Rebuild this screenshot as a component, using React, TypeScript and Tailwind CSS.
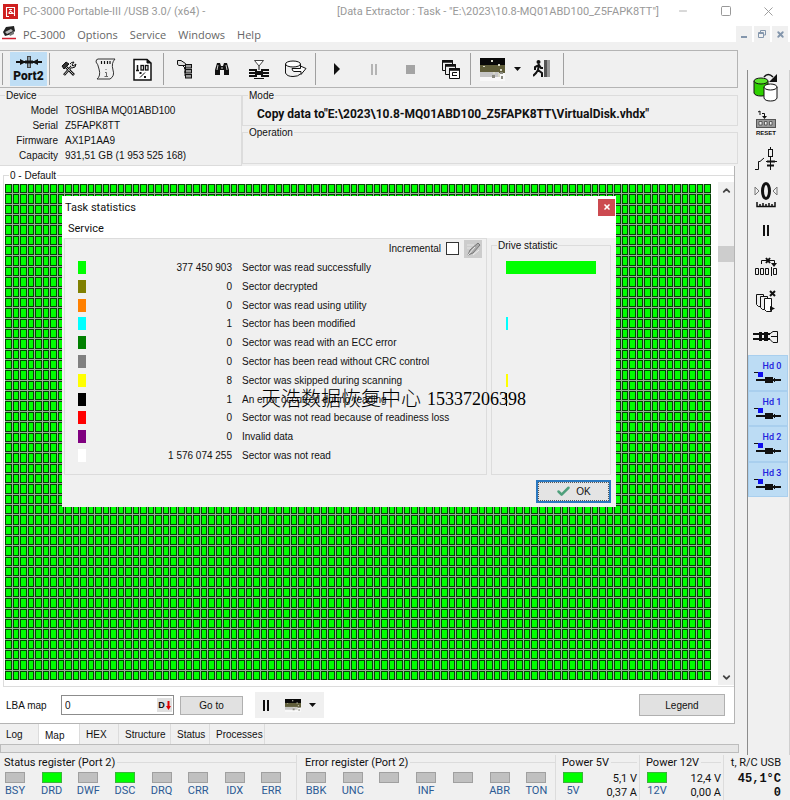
import type { ReactNode } from 'react';
import { Check, ChevronDown, ChevronUp, Minus, Square, X } from 'lucide-react';
import clsx from 'clsx';

const COLUMNS = 94;
const ROWS = 48;

const menuItems = ['PC-3000', 'Options', 'Service', 'Windows', 'Help'];

const deviceInfo = [
  { label: 'Model', value: 'TOSHIBA MQ01ABD100' },
  { label: 'Serial', value: 'Z5FAPK8TT' },
  { label: 'Firmware', value: 'AX1P1AA9' },
  { label: 'Capacity', value: '931,51 GB (1 953 525 168)' },
];

const statistics = [
  { color: 'bg-[#00ff00]', count: '377 450 903', text: 'Sector was read successfully', bar: 100 },
  { color: 'bg-[#808000]', count: '0', text: 'Sector decrypted', bar: 0 },
  { color: 'bg-[#ff8000]', count: '0', text: 'Sector was read using utility', bar: 0 },
  { color: 'bg-[#00ffff]', count: '1', text: 'Sector has been modified', bar: 2 },
  { color: 'bg-[#008000]', count: '0', text: 'Sector was read with an ECC error', bar: 0 },
  { color: 'bg-[#808080]', count: '0', text: 'Sector has been read without CRC control', bar: 0 },
  { color: 'bg-[#ffff00]', count: '8', text: 'Sector was skipped during scanning', bar: 2 },
  { color: 'bg-black', count: '1', text: 'An error occurred during reading', bar: 1 },
  { color: 'bg-[#ff0000]', count: '0', text: 'Sector was not read because of readiness loss', bar: 0 },
  { color: 'bg-[#800080]', count: '0', text: 'Invalid data', bar: 0 },
  { color: 'bg-white', count: '1 576 074 255', text: 'Sector was not read', bar: 0 },
];

const statusRegister = [
  { name: 'BSY', on: false },
  { name: 'DRD', on: true },
  { name: 'DWF', on: false },
  { name: 'DSC', on: true },
  { name: 'DRQ', on: false },
  { name: 'CRR', on: false },
  { name: 'IDX', on: false },
  { name: 'ERR', on: false },
];

const errorRegister = [
  { name: 'BBK', on: false },
  { name: 'UNC', on: false },
  { name: '', on: false },
  { name: 'INF', on: false },
  { name: '', on: false },
  { name: 'ABR', on: false },
  { name: 'TON', on: false },
];

const tabs = [
  { name: 'Log', width: 'w-[39px]' },
  { name: 'Map', width: 'w-[41px]' },
  { name: 'HEX', width: 'w-[39px]' },
  { name: 'Structure', width: 'w-[52px]' },
  { name: 'Status', width: 'w-[39px]' },
  { name: 'Processes', width: 'w-[55px]' },
];

/* ---------- icons ---------- */

function Svg({ w, h, children }: { w: number; h: number; children: ReactNode }) {
  return (
    <svg width={w} height={h} viewBox={`0 0 ${w} ${h}`} fill="none" stroke="#111" strokeWidth="1" className="shrink-0">
      {children}
    </svg>
  );
}

function AppLogo() {
  return (
    <Svg w={15} h={15}>
      <rect width="15" height="15" fill="#cf1f1f" stroke="none" />
      <path d="M3.500 12V3.500H11.500V12M3 12.500H6M5.500 9.500L7.500 7L10 9.500H6M6 5.500H9" stroke="#fff" strokeWidth="1.100" />
    </Svg>
  );
}

function DriveLogo() {
  return (
    <Svg w={15} h={15}>
      <path d="M1 7L4 2L12 1L13 6L10 9L3 11Z" fill="#222" stroke="none" />
      <path d="M3 7L9 4L11 6L5 9Z" fill="#bbb" stroke="none" />
      <path d="M7 9L12 6V9L8 11Z" fill="#777" stroke="none" />
      <path d="M0 13.500H14" stroke="#d02030" strokeWidth="1.500" />
    </Svg>
  );
}

function PortIcon() {
  return (
    <Svg w={26} h={14}>
      <path d="M0 7H26" strokeWidth="2" />
      <path d="M4 4L10 7L4 10ZM22 4L16 7L22 10Z" fill="#111" stroke="none" />
      <rect x="11.500" y="1.500" width="3" height="11" fill="#8a9aa5" stroke="#444" />
      <path d="M9 7H17" strokeWidth="3" />
    </Svg>
  );
}

function ToolsIcon() {
  return (
    <Svg w={16} h={16}>
      <path d="M3 14L11 5M13 14L5 6" strokeWidth="2.600" />
      <path d="M3.500 13.500L11 5M12.500 13.500L5 6" stroke="#ddd" strokeWidth=".8" />
      <path d="M1 5L5 1L8 3L3 8Z" fill="#333" />
      <path d="M9 3Q10 1 13 1L11 4L12 5L15 3Q15 7 11 7" fill="#ddd" />
    </Svg>
  );
}

function ScriptIcon() {
  return (
    <Svg w={22} h={24}>
      <path d="M3 2H20Q16 6 18 13Q20 19 15 22H2Q6 19 4 12Q3 7 1 5Q1 2 3 2Z" stroke="#333" />
      <path d="M6.500 4V8M9.500 4V8M12.500 4V8M15 4V8" strokeWidth="1.200" strokeDasharray="3 1" />
      <path d="M11 12V13M10 15.500H11.500V19M9.500 19.500H13" stroke="#666" />
    </Svg>
  );
}

function PercentIcon() {
  return (
    <Svg w={19} h={23}>
      <path d="M1 1.500H14L18 5V22H1Z" fill="#fff" strokeWidth="1.500" />
      <path d="M14 1V5H18" fill="#111" />
      <path d="M4.500 7V12M3 12.500H6" strokeWidth="1.500" />
      <rect x="8" y="7.500" width="2.500" height="4.500" strokeWidth="1.300" />
      <rect x="12.500" y="7.500" width="2.500" height="4.500" strokeWidth="1.300" />
      <path d="M7 19.500L12 14.500" />
      <path d="M6.500 15H8.500M11 19H13" strokeWidth="2" />
    </Svg>
  );
}

function TreeIcon() {
  return (
    <Svg w={18} h={20}>
      <path d="M1.500 5.500V1.500H5L9.500 4.500V6.500H3Z" fill="#ddd" />
      <path d="M7 7L9 9V17H10M8 9.500H10M8 13H10" />
      <rect x="9.500" y="5.500" width="6" height="3.500" fill="#999" />
      <rect x="9.500" y="10.500" width="6" height="3.500" fill="#999" />
      <rect x="9.500" y="15.500" width="6" height="3.500" fill="#999" />
    </Svg>
  );
}

function BinocularsIcon() {
  return (
    <Svg w={16} h={14}>
      <path d="M3 1H6L7 4H9L10 1H13L15 8V13H10V8H6V13H1V8Z" fill="#111" stroke="none" />
      <path d="M4 3L3 8M12 3L13 8M8 5V7" stroke="#ccc" />
    </Svg>
  );
}

function MergeIcon() {
  return (
    <Svg w={22} h={20}>
      <path d="M6.500 1.500H15.500L11 7Z" fill="#fff" stroke="#444" />
      <path d="M11 7V11" />
      <path d="M1 11H8M14 11H21M1 14H21M1 17H8M14 17H21" strokeWidth="2" />
      <path d="M8 10V18M14 10V18" strokeWidth="2" />
      <path d="M8 14H14" strokeWidth="4" />
      <path d="M6 19.500H16" />
    </Svg>
  );
}

function DiskExportIcon() {
  return (
    <Svg w={22} h={18}>
      <ellipse cx="8" cy="4" rx="7.500" ry="3" fill="#fff" />
      <path d="M.5 4V13Q2 16.500 8 16.500Q13 16.500 15.500 14M15.500 4V7" />
      <path d="M7 8.500H15.500V6L21 8.500L16 14.500V11.500H9Q7 11 7 8.500Z" fill="#fff" />
    </Svg>
  );
}

function WindowsIcon() {
  return (
    <Svg w={20} h={21}>
      <path d="M1.500 1.500H11.500V11.500H1.500Z" fill="#eee" />
      <path d="M4.500 5.500H14.500V15.500H4.500Z" fill="#eee" />
      <path d="M8.500 9.500H18.500V19.500H8.500Z" fill="#fff" />
      <path d="M1 2.500H12M4 6.500H15M8 10.500H19" strokeWidth="2.500" />
      <path d="M11.500 17V13.500H16M11.500 16.500H16" />
    </Svg>
  );
}

function ClosePagesIcon() {
  return (
    <Svg w={22} h={23}>
      <path d="M1.500 4.500H8.500V16.500H3.500L1.500 14.500Z" fill="#eee" />
      <path d="M5.500 6.500H12.500V19.500H7.500L5.500 17.500Z" fill="#eee" />
      <path d="M9.500 8.500H16.500V21.500H11.500L9.500 19.500Z" fill="#fff" />
      <path d="M15 1L20 6M20 1L15 6" strokeWidth="2" />
      <path d="M15 16L20 18.500L15 21Z" fill="#111" stroke="none" />
    </Svg>
  );
}

function MapThumbIcon({ w, h }: { w: number; h: number }) {
  return (
    <svg width={w} height={h} viewBox="0 0 25 23" preserveAspectRatio="none" className="shrink-0">
      <rect width="25" height="23" fill="#f8f8f8" />
      <rect width="25" height="8" fill="#080808" />
      <rect y="7" width="25" height="8" fill="#5f5d39" />
      <rect y="14" width="19" height="5" fill="#c6c6c6" />
      <path d="M11 2h2v2h-2zM18 6h2v2h-2zM3 8h2v1h-2zM20 11h2v2h-2zM13 14h2v2h-2zM18 15h2v4h-2z" fill="#d8d8c8" />
      <path d="M12 17h3v3h-3zM20 14h3v2h-3zM21 18h2v3h-2z" fill="#8a8a80" />
    </svg>
  );
}

function ExitIcon() {
  return (
    <Svg w={18} h={18}>
      <rect x="11" y="0" width="3" height="17" fill="#555" stroke="none" />
      <rect x="14" y="0" width="3" height="17" fill="#999" stroke="none" />
      <circle cx="5.500" cy="2" r="2" fill="#111" stroke="none" />
      <path d="M6 4L5 10L9 13V17M5 10L3 13L0 16M6 5L2 7V10M6 5L8 8L10 8" strokeWidth="2" />
    </Svg>
  );
}

function Caret() {
  return (
    <Svg w={7} h={4}>
      <path d="M0 0H7L3.500 4Z" fill="#111" stroke="none" />
    </Svg>
  );
}

function PauseIcon({ color = '#111' }: { color?: string }) {
  return (
    <Svg w={8} h={11}>
      <path d="M2 0V11M6 0V11" stroke={color} strokeWidth="2" />
    </Svg>
  );
}

function DatabasesIcon() {
  return (
    <Svg w={26} h={30}>
      <path d="M1 8V20Q2 23 8 23Q14 23 15 20V8" fill="#2fd000" />
      <ellipse cx="8" cy="8" rx="7" ry="3" fill="#5be52c" />
      <path d="M11 14V25Q12 28 17.500 28Q23 28 24 25V14" fill="#fff" />
      <ellipse cx="17.500" cy="14" rx="6.500" ry="3" fill="#fff" />
      <path d="M11 4Q15 -1 20 4" strokeWidth="1.500" />
      <path d="M24 1V9H16Z" fill="#111" stroke="none" />
    </Svg>
  );
}

function ResetIcon() {
  return (
    <Svg w={22} h={26}>
      <path d="M3 2L5 1V5M7 3.500H9.500V7" />
      <path d="M7 6L9.500 9L12 6Z" fill="#111" stroke="none" />
      <rect x="1.500" y="9.500" width="19" height="8" fill="#999" stroke="#555" />
      <path d="M4 11.500H7V15H4ZM9.500 11.500H12V15H9.500ZM14.500 11.500H17V15H14.500Z" fill="#eee" stroke="#444" strokeWidth=".8" />
      <text x="11" y="25" textAnchor="middle" fontSize="6" fontWeight="700" fontFamily="Liberation Sans, sans-serif" fill="#111" stroke="none">
        RESET
      </text>
    </Svg>
  );
}

function SwitchIcon() {
  return (
    <Svg w={24} h={24}>
      <path d="M1 22.500H4.500V14.500H6L10 11M12 14.500H23" />
      <rect x="14.500" y="2.500" width="4" height="7" fill="#eee" />
      <path d="M16.500 0V3M16.500 10V23" />
      <path d="M13 14.500H21M13 18.500H20" strokeWidth="2" />
    </Svg>
  );
}

function ZeroScaleIcon() {
  return (
    <Svg w={24} h={26}>
      <path d="M1 5V13L5 9ZM23 5V13L19 9Z" stroke="#777" />
      <ellipse cx="12" cy="9" rx="3.500" ry="7.500" strokeWidth="3" />
      <path d="M3 20V24.500H21V20M6 22V24M9 21V24M12 22V24M15 21V24M18 22V24" strokeWidth="1.500" />
    </Svg>
  );
}

function SkipIcon() {
  return (
    <Svg w={24} h={20}>
      <path d="M7.500 8V4.500H20.500V8" />
      <path d="M12 2L16 7M16 2L12 7" strokeWidth="2" />
      <path d="M17 7H23L20 11Z" fill="#111" stroke="none" />
      <path d="M1.500 12.500H4.500V18.500H1.500ZM6.500 12.500H9.500V18.500H6.500ZM11.500 12.500H14.500V18.500H11.500ZM19.500 12.500H22.500V18.500H19.500Z" />
      <path d="M17.500 11V20" />
    </Svg>
  );
}

function ConnectorIcon() {
  return (
    <Svg w={26} h={14}>
      <path d="M0 4H17M0 9H17" strokeWidth="2" />
      <rect x="6" y="2" width="3" height="9" fill="#111" stroke="none" />
      <rect x="11" y="2" width="4" height="9" fill="#111" stroke="none" />
      <path d="M16 4.500L20 1.500H24.500V12.500H20L16 8.500M18 6.500H24" />
    </Svg>
  );
}

function HeadIcon() {
  return (
    <Svg w={28} h={13}>
      <path d="M0 1.500H6" stroke="#111" />
      <rect x="4" y="1" width="5" height="5" fill="#1010ee" stroke="none" />
      <path d="M2 9H27" strokeWidth="2" />
      <rect x="11" y="6" width="8" height="6" fill="#111" stroke="none" />
      <path d="M20.500 7V11" />
    </Svg>
  );
}

function PencilIcon() {
  return (
    <Svg w={16} h={16}>
      <path d="M2 4H9M2 7H6" stroke="#e4e4e4" />
      <path d="M3 14L5 9L13 2L15 4L8 12Z" fill="#aaa" stroke="#777" />
      <path d="M3 14L10 6M8 14L14 9" stroke="#eee" />
    </Svg>
  );
}

/* ---------- building blocks ---------- */

function Group({ title, className, children }: { title: string; className?: string; children?: ReactNode }) {
  return (
    <fieldset className={clsx('min-w-0 border border-[#dcdcdc]', className)}>
      <legend className="ml-[5px] px-px leading-[13px]">{title}</legend>
      {children}
    </fieldset>
  );
}

function ToolButton({ label, className, children }: { label: string; className?: string; children: ReactNode }) {
  return (
    <button aria-label={label} className={clsx('flex h-[34px] w-[37px] shrink-0 items-center justify-center', className)}>
      {children}
    </button>
  );
}

function Separator() {
  return <span className="h-8 w-px shrink-0 bg-[#a0a0a0]" />;
}

function Led({ name, on }: { name: string; on: boolean }) {
  return (
    <div className="flex min-w-0 flex-1 flex-col items-start">
      <span className={clsx('h-[11px] w-5 border', on ? 'border-[#3cb43c] bg-[#00ff00]' : 'border-[#a0a0a0] bg-[#c0c0c0]')} />
      <span className="flex w-5 justify-center whitespace-nowrap text-[#2c5a94]">{name}</span>
    </div>
  );
}

function RegisterTitle({ children }: { children: ReactNode }) {
  return (
    <h2 className="-ml-px flex items-center gap-[2px] leading-[15px] whitespace-nowrap after:h-px after:flex-1 after:bg-[#dcdcdc]">
      {children}
    </h2>
  );
}

function SectorMap() {
  return (
    <div className="mt-[2px] grid h-[496px] min-w-0 flex-1 grid-cols-[repeat(94,minmax(0,1fr))] grid-rows-[repeat(48,minmax(0,1fr))] gap-px bg-[#98ac98]">
      {Array.from({ length: COLUMNS * ROWS }, (_, i) => (
        <i key={i} className="border border-[#044404] bg-[#00ff00]" />
      ))}
    </div>
  );
}

function TaskStatistics() {
  return (
    <div role="dialog" aria-label="Task statistics" className="absolute top-[196px] left-[62px] w-[554px] bg-[#f0f0f0] pb-1">
      <div className="bg-white font-['Roboto',sans-serif] text-[11px]">
        <div className="flex h-[22px] items-center justify-between pr-px pl-[3px]">
          <span>Task statistics</span>
          <button aria-label="Close" className="flex h-[17px] w-[17px] items-center justify-center bg-[#cc4a50] text-white">
            <X size={8} strokeWidth={5} />
          </button>
        </div>
        <div className="flex h-[20px] items-center pl-[6px]">
          <button>Service</button>
        </div>
      </div>
      <div className="flex gap-1 pr-[5px] pl-[2px]">
        <div className="h-[237px] w-[423px] border border-[#dcdcdc]">
          <div className="flex h-[19px] items-center justify-end gap-[5px] pr-1">
            <label htmlFor="incremental">Incremental</label>
            <input id="incremental" type="checkbox" className="h-[13px] w-[13px] appearance-none border border-[#333] bg-white" />
            <button aria-label="Clear" className="flex h-[18px] w-[18px] items-center justify-center bg-[#cccccc]">
              <PencilIcon />
            </button>
          </div>
          <table className="h-[207px] w-full">
            <tbody>
              {statistics.map((s) => (
                <tr key={s.text}>
                  <td className="w-[38px] pl-[13px]">
                    <span className={clsx('block h-[13px] w-2', s.color)} />
                  </td>
                  <td className="w-[129px] text-right">{s.count}</td>
                  <td className="pl-[10px] whitespace-nowrap">{s.text}</td>
                </tr>
              ))}
            </tbody>
          </table>
        </div>
        <Group title="Drive statistic" className="mt-px h-[236px] flex-1">
          <div className="mt-[6px] flex h-[207px] flex-col px-[14px]">
            {statistics.map((s) => (
              <div key={s.text} className="flex flex-1 items-center">
                <span className={clsx('h-[13px]', s.color)} style={{ width: `${s.bar}%` }} />
              </div>
            ))}
          </div>
        </Group>
      </div>
      <div className="mt-[5px] flex justify-end pr-[5px]">
        <button className="flex h-[23px] w-[75px] items-center justify-center gap-[5px] border-2 border-[#2a78c0] bg-[#e4e4e4] outline-1 -outline-offset-3 outline-dotted outline-[#555]">
          <Check size={15} strokeWidth={4} className="text-[#4fa07c]" />
          OK
        </button>
      </div>
    </div>
  );
}

function Toolbar() {
  return (
    <div className="mr-[9px] flex h-[38px] items-center border-y border-r border-[#b4b4b4] pl-[2px]">
      <Separator />
      <ToolButton label="Port 2" className="ml-[7px] flex-col bg-[#bfdef5]">
        <PortIcon />
        <span className="font-['Roboto',sans-serif] text-xs leading-[14px] font-black">Port2</span>
      </ToolButton>
      <span className="w-[2px]" />
      <Separator />
      <ToolButton label="Tools"><ToolsIcon /></ToolButton>
      <ToolButton label="Script"><ScriptIcon /></ToolButton>
      <ToolButton label="Progress"><PercentIcon /></ToolButton>
      <span className="w-[2px]" />
      <Separator />
      <span className="w-[2px]" />
      <ToolButton label="Tree"><TreeIcon /></ToolButton>
      <ToolButton label="Find"><BinocularsIcon /></ToolButton>
      <ToolButton label="Merge"><MergeIcon /></ToolButton>
      <ToolButton label="Export"><DiskExportIcon /></ToolButton>
      <span className="w-px" />
      <Separator />
      <span className="w-[2px]" />
      <ToolButton label="Start">
        <Svg w={6} h={12}><path d="M0 0V12L6 6Z" fill="#111" stroke="none" /></Svg>
      </ToolButton>
      <ToolButton label="Pause"><PauseIcon color="#b4b4b4" /></ToolButton>
      <ToolButton label="Stop"><span className="h-[9px] w-[9px] bg-[#a4a4a4]" /></ToolButton>
      <ToolButton label="Cascade" className="ml-[3px]"><WindowsIcon /></ToolButton>
      <span className="w-px" />
      <Separator />
      <ToolButton label="Map view" className="ml-[3px]"><MapThumbIcon w={25} h={23} /></ToolButton>
      <button aria-label="Map view options" className="flex h-[34px] w-3 items-center justify-center"><Caret /></button>
      <ToolButton label="Exit"><ExitIcon /></ToolButton>
      <span className="w-[3px]" />
      <Separator />
    </div>
  );
}

function Sidebar() {
  const icons = [
    { label: 'Copy drive', icon: <DatabasesIcon /> },
    { label: 'Reset', icon: <ResetIcon /> },
    { label: 'Power', icon: <SwitchIcon /> },
    { label: 'Recalibrate', icon: <ZeroScaleIcon /> },
    { label: 'Pause', icon: <PauseIcon /> },
    { label: 'Skip', icon: <SkipIcon /> },
    { label: 'Close pages', icon: <ClosePagesIcon /> },
    { label: 'Connector', icon: <ConnectorIcon /> },
  ];

  return (
    <div className="mt-7 w-[43px] shrink-0 border-r border-l border-r-[#d0d0d0] border-l-[#8c8c8c] pr-px">
      <div className="flex h-[285px] flex-col">
        {icons.map((item) => (
          <button key={item.label} aria-label={item.label} className="flex w-[36px] flex-1 items-center justify-center">
            {item.icon}
          </button>
        ))}
      </div>
      <div className="flex h-[142px] flex-col">
        {['Hd 0', 'Hd 1', 'Hd 2', 'Hd 3'].map((head) => (
          <button key={head} className="flex flex-1 flex-col items-center justify-center border border-[#a9cfee] bg-[#bcdcf4] font-['Roboto',sans-serif] text-[9px] leading-[10px] font-medium text-[#2222dd]">
            <span className="pl-2">{head}</span>
            <HeadIcon />
          </button>
        ))}
      </div>
    </div>
  );
}

function StatusBar() {
  return (
    <div className="grid grid-cols-[297fr_259fr_84fr_84fr_66fr] font-['Roboto',sans-serif] text-[11px]">
      <section className="border-r border-[#dcdcdc] pl-[5px]">
        <RegisterTitle>Status register (Port 2)</RegisterTitle>
        <div className="mt-[2px] -mr-[2px] flex">{statusRegister.map((r) => <Led key={r.name} {...r} />)}</div>
      </section>
      <section className="border-r border-[#dcdcdc] pl-[9px]">
        <RegisterTitle>Error register (Port 2)</RegisterTitle>
        <div className="mt-[2px] -mr-2 flex">{errorRegister.map((r, i) => <Led key={i} {...r} />)}</div>
      </section>
      {[
        { name: '5V', volts: '5,1 V', amps: '0,37 A' },
        { name: '12V', volts: '12,4 V', amps: '0,00 A' },
      ].map((p) => (
        <section key={p.name} className="border-r border-[#dcdcdc] pr-[2px] pl-[7px]">
          <RegisterTitle>Power {p.name}</RegisterTitle>
          <div className="mt-[2px] flex justify-between">
            <Led name={p.name} on />
            <div className="text-right leading-[14px] whitespace-nowrap">
              <p>{p.volts}</p>
              <p>{p.amps}</p>
            </div>
          </div>
        </section>
      ))}
      <section className="pr-[9px] pl-[5px] text-right whitespace-nowrap">
        <h2 className="leading-[15px]">t, R/C USB</h2>
        <div className="mt-[2px] font-['Liberation_Mono',monospace] text-xs leading-[14px] font-bold">
          <p>45,1°C</p>
          <p>0</p>
        </div>
      </section>
    </div>
  );
}

export default function App() {
  return (
    <div className="relative flex min-h-screen flex-col bg-[#f0f0f0] font-['Liberation_Sans',Arial,sans-serif] text-[10px] leading-[15px] text-[#111]">
      <header className="bg-white text-[11px]">
        <div className="flex h-[22px] items-center pl-[3px] font-['Roboto',sans-serif] text-[#999]">
          <AppLogo />
          <h1 className="ml-[5px] w-[314px] shrink-0">PC-3000 Portable-III /USB 3.0/ (x64) -</h1>
          <span className="flex-1 whitespace-nowrap">[Data Extractor : Task - "E:\2023\10.8-MQ01ABD100_Z5FAPK8TT"]</span>
          <button aria-label="Minimize" className="flex w-[43px] justify-center"><Minus size={12} strokeWidth={1.5} /></button>
          <button aria-label="Maximize" className="flex w-[43px] justify-center"><Square size={12} strokeWidth={2} /></button>
          <button aria-label="Close" className="flex w-[43px] justify-center"><X size={15} strokeWidth={1.5} /></button>
        </div>
        <div className="flex h-5 items-end font-['Open_Sans',sans-serif]">
          <div className="flex h-5 flex-1 items-center pl-[2px] text-[#666]">
            <DriveLogo />
            <nav className="ml-[6px] flex items-center gap-3 pt-[4px]">
              {menuItems.map((item) => <button key={item}>{item}</button>)}
            </nav>
          </div>
          <div className="flex gap-[2px] pr-[2px] text-[#8496ac]">
            <button aria-label="Minimize task" className="flex h-4 w-4 items-end justify-center bg-[#f0f0f0] pb-1"><span className="h-[2px] w-[6px] bg-[#8496ac]" /></button>
            <button aria-label="Restore task" className="flex h-4 w-4 items-center justify-center bg-[#f0f0f0]">
              <svg width="8" height="8" viewBox="0 0 8 8" fill="none" stroke="currentColor"><path d="M2.500 2V.5H7.500V5H6M.5 2.500H5.500V7.500H.5ZM.5 3.500H5.500" /></svg>
            </button>
            <button aria-label="Close task" className="flex h-4 w-4 items-center justify-center bg-[#f0f0f0]"><X size={9} strokeWidth={5} /></button>
          </div>
        </div>
      </header>

      <div className="flex flex-1">
        <main className="flex min-w-0 flex-1 flex-col pt-2">
          <Toolbar />
          <div className="mt-px mr-[9px] grid grid-cols-[242px_1fr]">
            <Group title="Device" className="h-[77px] border-l-0">
              <dl className="grid grid-cols-[58px_1fr] gap-x-[7px] pt-px">
                {deviceInfo.map((d) => (
                  <div key={d.label} className="contents">
                    <dt className="text-right">{d.label}</dt>
                    <dd>{d.value}</dd>
                  </div>
                ))}
              </dl>
            </Group>
            <div>
              <Group title="Mode" className="h-[37px]">
                <p className="pt-[5px] pl-[14px] font-['Roboto',sans-serif] text-xs leading-[15px] font-bold">Copy data to"E:\2023\10.8-MQ01ABD100_Z5FAPK8TT\VirtualDisk.vhdx"</p>
              </Group>
              <Group title="Operation" className="h-[38px]" />
            </div>
          </div>

          <div className="mr-[12px] border-r border-b border-[#b4b4b4] bg-white pt-[3px]">
            <Group title="0 - Default" className="ml-[3px] h-[518px] border-r-0">
              <div className="flex justify-between pl-px">
                <SectorMap />
                <div className="ml-[7px] flex h-[503px] w-4 flex-col items-center bg-[#f0f0f0] text-[#444]">
                  <button aria-label="Scroll up" className="flex h-4 items-center"><ChevronUp size={11} strokeWidth={4} /></button>
                  <span className="mt-12 h-4 w-full bg-[#cdcdcd]" />
                  <button aria-label="Scroll down" className="mt-auto flex h-4 items-center"><ChevronDown size={11} strokeWidth={4} /></button>
                </div>
              </div>
            </Group>
            <div className="flex h-[36px] items-center pl-[6px]">
              <label htmlFor="lba" className="w-[55px]">LBA map</label>
              <div className="flex h-5 w-[113px] items-center border border-[#8c8c8c] bg-white pr-px">
                <input id="lba" defaultValue="0" className="min-w-0 flex-1 pl-[3px] outline-none" />
                <button className="flex h-[14px] w-[15px] items-center justify-center gap-px bg-[#e0e0e0] text-[9px] font-bold">
                  D
                  <Svg w={5} h={9}>
                    <path d="M1.500 0H3.500V5H5L2.500 9L0 5H1.500Z" fill="#e00000" stroke="none" />
                  </Svg>
                </button>
              </div>
              <button className="ml-[6px] h-[19px] w-[63px] border border-[#b0b0b0] bg-[#e1e1e1]">Go to</button>
              <div className="ml-3 flex h-[26px] w-[69px] items-center bg-[#f0f0f0] pl-[7px]">
                <button aria-label="Pause map"><PauseIcon /></button>
                <button aria-label="Map colours" className="ml-[15px]"><MapThumbIcon w={16} h={13} /></button>
                <button aria-label="Map options" className="ml-2"><Caret /></button>
              </div>
              <button className="mr-[9px] ml-auto h-[22px] w-[86px] border border-[#b0b0b0] bg-[#e1e1e1]">Legend</button>
            </div>
          </div>

          <div role="tablist" className="flex h-5">
            {tabs.map((tab) => (
              <button
                key={tab.name}
                role="tab"
                aria-selected={tab.name === 'Map'}
                className={clsx('border-r border-[#dcdcdc] pl-[6px] text-left', tab.width, tab.name === 'Map' && 'bg-white pt-[2px]')}
              >
                {tab.name}
              </button>
            ))}
          </div>
          <div className="mr-[8px] h-[9px] border border-[#bcbcbc] bg-[#e6e6e6]" />
        </main>
        <Sidebar />
      </div>

      <StatusBar />

      <TaskStatistics />
      <p className="absolute top-[388px] left-[261px] flex items-center gap-[6px] font-['Liberation_Serif','Noto_Sans_CJK_SC',serif] text-lg leading-[22px] whitespace-nowrap text-black">
        <span className="text-xl leading-[22px] font-light">天浩数据恢复中心</span>
        15337206398
      </p>
    </div>
  );
}
